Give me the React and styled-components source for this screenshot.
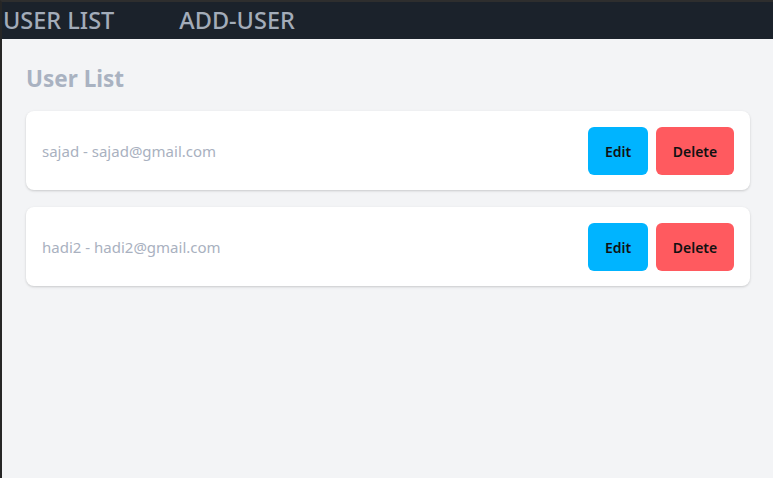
import styled, { createGlobalStyle } from 'styled-components';

const GlobalStyle = createGlobalStyle`
  html, body {
    margin: 0;
    padding: 0;
    height: 100%;
  }
  body {
    font-family: "Noto Sans", "Open Sans", sans-serif;
    background: #f3f4f6;
  }
  #root {
    min-height: 100%;
  }
`;

const users = [
  { id: 1, name: 'sajad', email: 'sajad@gmail.com' },
  { id: 2, name: 'hadi2', email: 'hadi2@gmail.com' },
];

const App = () => {
  return (
    <Frame>
      <GlobalStyle />
      <NavBar>
        <NavLink>USER LIST</NavLink>
        <NavLink>ADD-USER</NavLink>
      </NavBar>
      <Main>
        <Title>User List</Title>
        <UserList>
          {users.map(user => (
            <UserCard key={user.id}>
              <UserText>
                {user.name} - {user.email}
              </UserText>
              <Actions>
                <ActionButton color="#00b4ff">Edit</ActionButton>
                <ActionButton color="#ff5a5f" wide>
                  Delete
                </ActionButton>
              </Actions>
            </UserCard>
          ))}
        </UserList>
      </Main>
    </Frame>
  );
};

export default App;

const Frame = styled.div`
  min-height: 100vh;
  box-sizing: border-box;
  border-top: 2px solid #2e2e2e;
  border-left: 2px solid #262626;
  display: flex;
  flex-direction: column;
  background: #f3f4f6;
`;

const NavBar = styled.nav`
  height: 37px;
  background: #1b222b;
  display: flex;
  align-items: center;
  gap: 65px;
  padding-left: 1px;
`;

const NavLink = styled.a`
  color: #a3acb9;
  font-size: 23.5px;
  font-weight: 500;
  line-height: 1;
  cursor: pointer;
`;

const Main = styled.main`
  flex: 1;
  padding: 24px 23px 24px 24px;
`;

const Title = styled.h2`
  margin: 0 0 16px;
  font-size: 22.5px;
  line-height: 32px;
  font-weight: 700;
  color: #a9b2c1;
`;

const UserList = styled.div`
  display: flex;
  flex-direction: column;
  gap: 17px;
`;

const UserCard = styled.div`
  background: #fff;
  border-radius: 8px;
  box-shadow: 0 1px 3px rgba(0, 0, 0, 0.12), 0 1px 2px rgba(0, 0, 0, 0.06);
  padding: 16px 16px 15px;
  display: flex;
  align-items: center;
  justify-content: space-between;
`;

const UserText = styled.p`
  margin: 0;
  font-size: 15px;
  color: #a9b1c0;
`;

const Actions = styled.div`
  display: flex;
  gap: 8px;
`;

const ActionButton = styled.button`
  height: 48px;
  width: ${p => (p.wide ? '78px' : '60px')};
  border: none;
  border-radius: 6px;
  background: ${p => p.color};
  color: #111;
  font-family: inherit;
  font-size: 14px;
  font-weight: 600;
  cursor: pointer;
`;
